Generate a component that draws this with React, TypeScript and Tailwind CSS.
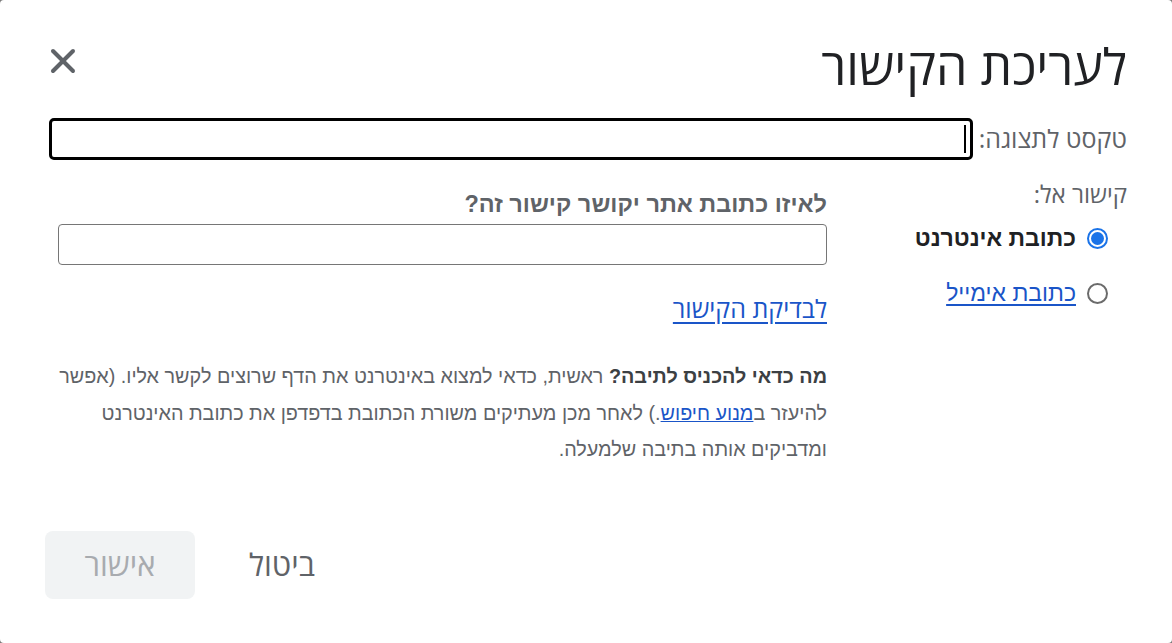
import { X } from 'lucide-react';

export default function App() {
  return (
    <div className="h-[643px] w-[1172px] bg-[#7a7a7a] overflow-hidden">
      <div
        dir="rtl"
        className="h-full w-full bg-white rounded-[4px] px-[45px] pt-[34px] text-[#5f6368]"
        style={{ fontFamily: '"Open Sans", "Liberation Sans", sans-serif' }}
      >
        {/* header */}
        <div className="flex items-start justify-between h-[64px]">
          <h1 className="text-[50px] leading-[64px] font-normal text-[#202124]">לעריכת הקישור</h1>
          <button className="mt-[7px] ml-[-2px] text-[#5f6368]">
            <X className="size-[40px]" strokeWidth={2.4} />
          </button>
        </div>

        {/* display text */}
        <div className="mt-[20px] flex items-center gap-[6px]">
          <label className="text-[25px] whitespace-nowrap">טקסט לתצוגה:</label>
          <div className="flex-1 h-[42px] rounded-[5px] border-[3px] border-black flex items-center pr-[4px] ml-[4px]">
            <span className="w-[2px] h-[28px] bg-black" />
          </div>
        </div>

        <div className="mt-[18px] flex">
          {/* right column */}
          <div className="w-[300px] shrink-0">
            <div className="text-[24px] leading-[32px]">קישור אל:</div>
            <div className="mt-[16px] pr-[19px] flex flex-col gap-[31px]">
              <label className="flex items-center gap-[11px]">
                <span className="size-[21px] rounded-full border-2 border-[#1a73e8] flex items-center justify-center">
                  <span className="size-[13px] rounded-full bg-[#1a73e8]" />
                </span>
                <span className="text-[23px] leading-[24px] font-bold text-[#202124]" style={{ fontFamily: '"Liberation Sans", sans-serif' }}>
                  כתובת אינטרנט
                </span>
              </label>
              <label className="flex items-center gap-[11px]">
                <span className="size-[21px] rounded-full border-2 border-[#6b6b6b]" />
                <a className="text-[23px] leading-[24px] text-[#1a55c8] underline underline-offset-[3px]" style={{ fontFamily: '"Liberation Sans", sans-serif' }}>
                  כתובת אימייל
                </a>
              </label>
            </div>
          </div>

          {/* left column */}
          <div className="w-[769px] pt-[10px]">
            <div className="text-[23.5px] leading-[32px] font-bold text-[#5f6368]" style={{ fontFamily: '"Liberation Sans", sans-serif' }}>
              לאיזו כתובת אתר יקושר קישור זה?
            </div>
            <div className="mt-[4px] h-[41px] rounded-[4px] border border-[#767676]" />
            <div className="mt-[27px]">
              <a className="text-[25px] leading-[32px] text-[#1a55c8] underline underline-offset-[4px]">לבדיקת הקישור</a>
            </div>
            <p
              className="mt-[34px] ml-[-8px] text-[19.8px] leading-[36.5px] text-[#5f6368]"
              style={{ fontFamily: '"Liberation Sans", sans-serif' }}
            >
              <b className="text-[#3c4043]">מה כדאי להכניס לתיבה?</b> ראשית, כדאי למצוא באינטרנט את הדף שרוצים לקשר אליו. (אפשר להיעזר ב
              <a className="text-[#1a55c8] underline">מנוע חיפוש</a>.) לאחר מכן מעתיקים משורת הכתובת בדפדפן את כתובת האינטרנט ומדביקים אותה בתיבה שלמעלה.
            </p>
          </div>
        </div>

        {/* footer */}
        <div className="mt-[63px] flex justify-end items-center gap-[54px]">
          <button className="text-[31px] text-[#5f6368]">ביטול</button>
          <button className="w-[150px] h-[68px] rounded-[8px] bg-[#f1f3f4] text-[31px] text-[#a8abaf]">אישור</button>
        </div>
      </div>
    </div>
  );
}
